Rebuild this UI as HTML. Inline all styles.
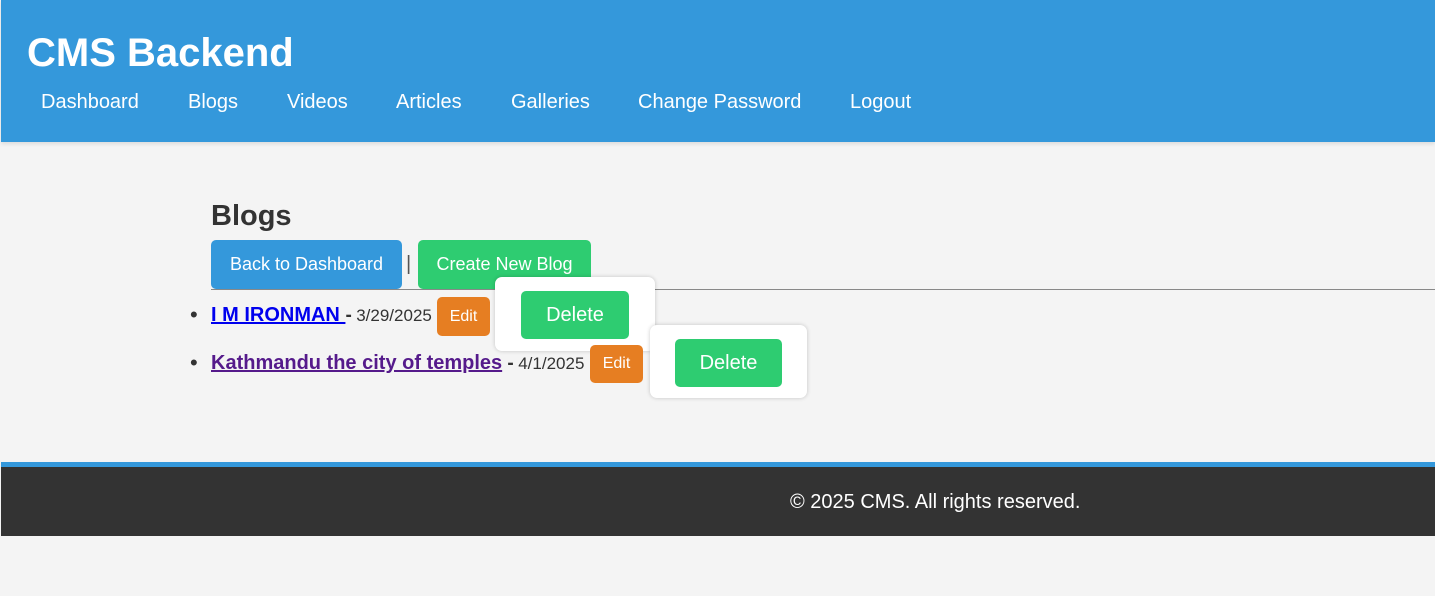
<!DOCTYPE html>
<html><head><meta charset="utf-8"><style>
*{margin:0;padding:0;box-sizing:border-box}
body{width:1435px;height:596px;background:#f4f4f4;font-family:"Liberation Sans",Arial,sans-serif;position:relative;overflow:hidden;color:#333}
.a{position:absolute;white-space:nowrap}
header{position:absolute;left:1px;top:0;width:1434px;height:142px;background:#3498db;box-shadow:0 2px 4px rgba(0,0,0,.1)}
h1{position:absolute;left:26px;top:31px;font-size:40px;font-weight:bold;color:#fff;line-height:44px}
.nav{color:#fff;font-size:20px;top:90px;line-height:24px}
.btn{position:absolute;border-radius:5px;color:#fff;text-align:center}
.box{position:absolute;background:#fff;border-radius:7px;box-shadow:0 0 4px rgba(0,0,0,.2)}
a{font-weight:bold;font-size:20px;text-decoration:underline}
</style></head><body>
<header>
<h1>CMS Backend</h1>
<span class="a nav" style="left:40px">Dashboard</span>
<span class="a nav" style="left:187px">Blogs</span>
<span class="a nav" style="left:286px">Videos</span>
<span class="a nav" style="left:395px">Articles</span>
<span class="a nav" style="left:510px">Galleries</span>
<span class="a nav" style="left:637px">Change Password</span>
<span class="a nav" style="left:849px">Logout</span>
</header>
<div class="a" style="left:211px;top:199px;font-size:29px;font-weight:bold;line-height:34px">Blogs</div>
<div class="btn" style="left:211px;top:240px;width:191px;height:49px;background:#3498db;font-size:18px;line-height:49px">Back to Dashboard</div>
<div class="a" style="left:406px;top:252px;font-size:20px;line-height:24px;color:#555">|</div>
<div class="btn" style="left:418px;top:240px;width:173px;height:49px;background:#2ecc71;font-size:18px;line-height:49px">Create New Blog</div>
<div class="a" style="left:211px;top:289px;width:1224px;height:1px;background:#888"></div>

<div class="a" style="left:190px;top:303px;font-size:22px;line-height:24px">•</div>
<div class="a" style="left:211px;top:303px;line-height:24px"><a style="color:#0000ee">I M IRONMAN </a><b style="font-size:19px"> -</b> <span style="font-size:17px">3/29/2025</span></div>
<div class="btn" style="left:437px;top:297px;width:53px;height:39px;background:#e67e22;font-size:16px;line-height:39px">Edit</div>
<div class="box" style="left:495px;top:277px;width:160px;height:74px"></div>
<div class="btn" style="left:521px;top:291px;width:108px;height:48px;background:#2ecc71;font-size:20px;line-height:48px">Delete</div>

<div class="a" style="left:190px;top:351px;font-size:22px;line-height:24px">•</div>
<div class="a" style="left:211px;top:351px;line-height:24px"><a style="color:#551a8b">Kathmandu the city of temples</a><b style="font-size:19px"> -</b> <span style="font-size:17px">4/1/2025</span></div>
<div class="btn" style="left:590px;top:345px;width:53px;height:38px;background:#e67e22;font-size:16px;line-height:38px">Edit</div>
<div class="box" style="left:650px;top:325px;width:157px;height:73px"></div>
<div class="btn" style="left:675px;top:339px;width:107px;height:48px;background:#2ecc71;font-size:20px;line-height:48px">Delete</div>

<div class="a" style="left:1px;top:462px;width:1434px;height:5px;background:#3498db"></div>
<div class="a" style="left:1px;top:467px;width:1434px;height:69px;background:#333"></div>
<div class="a" style="left:790px;top:490px;font-size:20px;line-height:24px;color:#fff">© 2025 CMS. All rights reserved.</div>
</body></html>
